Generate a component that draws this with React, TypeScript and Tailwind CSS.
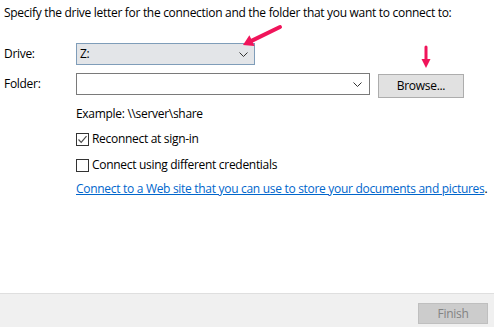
import React from "react";

const font = { fontFamily: '"Open Sans", "Noto Sans", sans-serif' };

function Chevron() {
  return (
    <svg width="9" height="5" viewBox="0 0 9 5" className="shrink-0">
      <path d="M0.5 0.5 L4.5 4.5 L8.5 0.5" fill="none" stroke="#333" strokeWidth="1" />
    </svg>
  );
}

function Check() {
  return (
    <svg width="11" height="11" viewBox="0 0 11 11">
      <path d="M1.5 5.5 L4.2 8.3 L9.5 2.2" fill="none" stroke="#4a4a4a" strokeWidth="1.2" />
    </svg>
  );
}

export default function App() {
  return (
    <div
      className="relative w-[494px] h-[327px] bg-white flex flex-col text-[12px] tracking-[-0.3px] text-black overflow-hidden whitespace-nowrap"
      style={font}
    >
      <div className="flex-1 pl-[4px]">
        <p className="mt-[5px] leading-[16px]">
          Specify the drive letter for the connection and the folder that you want to connect to:
        </p>

        <div className="mt-[22px] flex items-center h-[22px]">
          <span className="w-[72px]">Drive:</span>
          <div className="w-[179px] h-[22px] bg-[#e3e5e8] border border-[#7f9db9] flex items-center pl-[3px] pr-[6px]">
            <span className="flex-1">Z:</span>
            <Chevron />
          </div>
        </div>

        <div className="mt-[8px] flex items-start h-[25px]">
          <span className="w-[72px] leading-[22px]">Folder:</span>
          <div className="w-[294px] h-[22px] border border-[#7a7a7a] flex items-center justify-end pr-[7px]">
            <Chevron />
          </div>
          <button className="ml-[8px] mt-[1px] w-[86px] h-[24px] bg-[#e1e1e1] border border-[#adadad] leading-[22px]">
            Browse...
          </button>
        </div>

        <div className="pl-[72px]">
          <p className="mt-[8px] leading-[16px]">Example: \\server\share</p>

          <label className="mt-[9px] flex items-center h-[16px] gap-[3px]">
            <span className="w-[13px] h-[13px] border border-[#333] flex items-center justify-center bg-white">
              <Check />
            </span>
            <span>Reconnect at sign-in</span>
          </label>

          <label className="mt-[10px] flex items-center h-[16px] gap-[3px]">
            <span className="w-[13px] h-[13px] border border-[#333] bg-white" />
            <span>Connect using different credentials</span>
          </label>

          <p className="mt-[8px] leading-[16px]">
            <a className="text-[#0066cc] underline">
              Connect to a Web site that you can use to store your documents and pictures
            </a>
            .
          </p>
        </div>
      </div>

      <div className="h-[34px] border-t border-[#dfdfdf] bg-[#f0f0f0] flex items-start justify-end pr-[6px] pt-[9px]">
        <button className="w-[70px] h-[21px] bg-[#cccccc] border border-[#bfbfbf] text-[#838383] leading-[19px]">
          Finish
        </button>
      </div>

      <svg className="absolute inset-0 pointer-events-none" width="494" height="327">
        <line x1="280" y1="27" x2="252" y2="40.6" stroke="#f0145a" strokeWidth="4" strokeLinecap="round" />
        <polygon points="243,45 254.6,46 249.4,35.2" fill="#f0145a" />
        <line x1="426" y1="47" x2="426" y2="60" stroke="#f0145a" strokeWidth="3" strokeLinecap="round" />
        <polygon points="426,68 421.5,59 430.5,59" fill="#f0145a" />
      </svg>
    </div>
  );
}
